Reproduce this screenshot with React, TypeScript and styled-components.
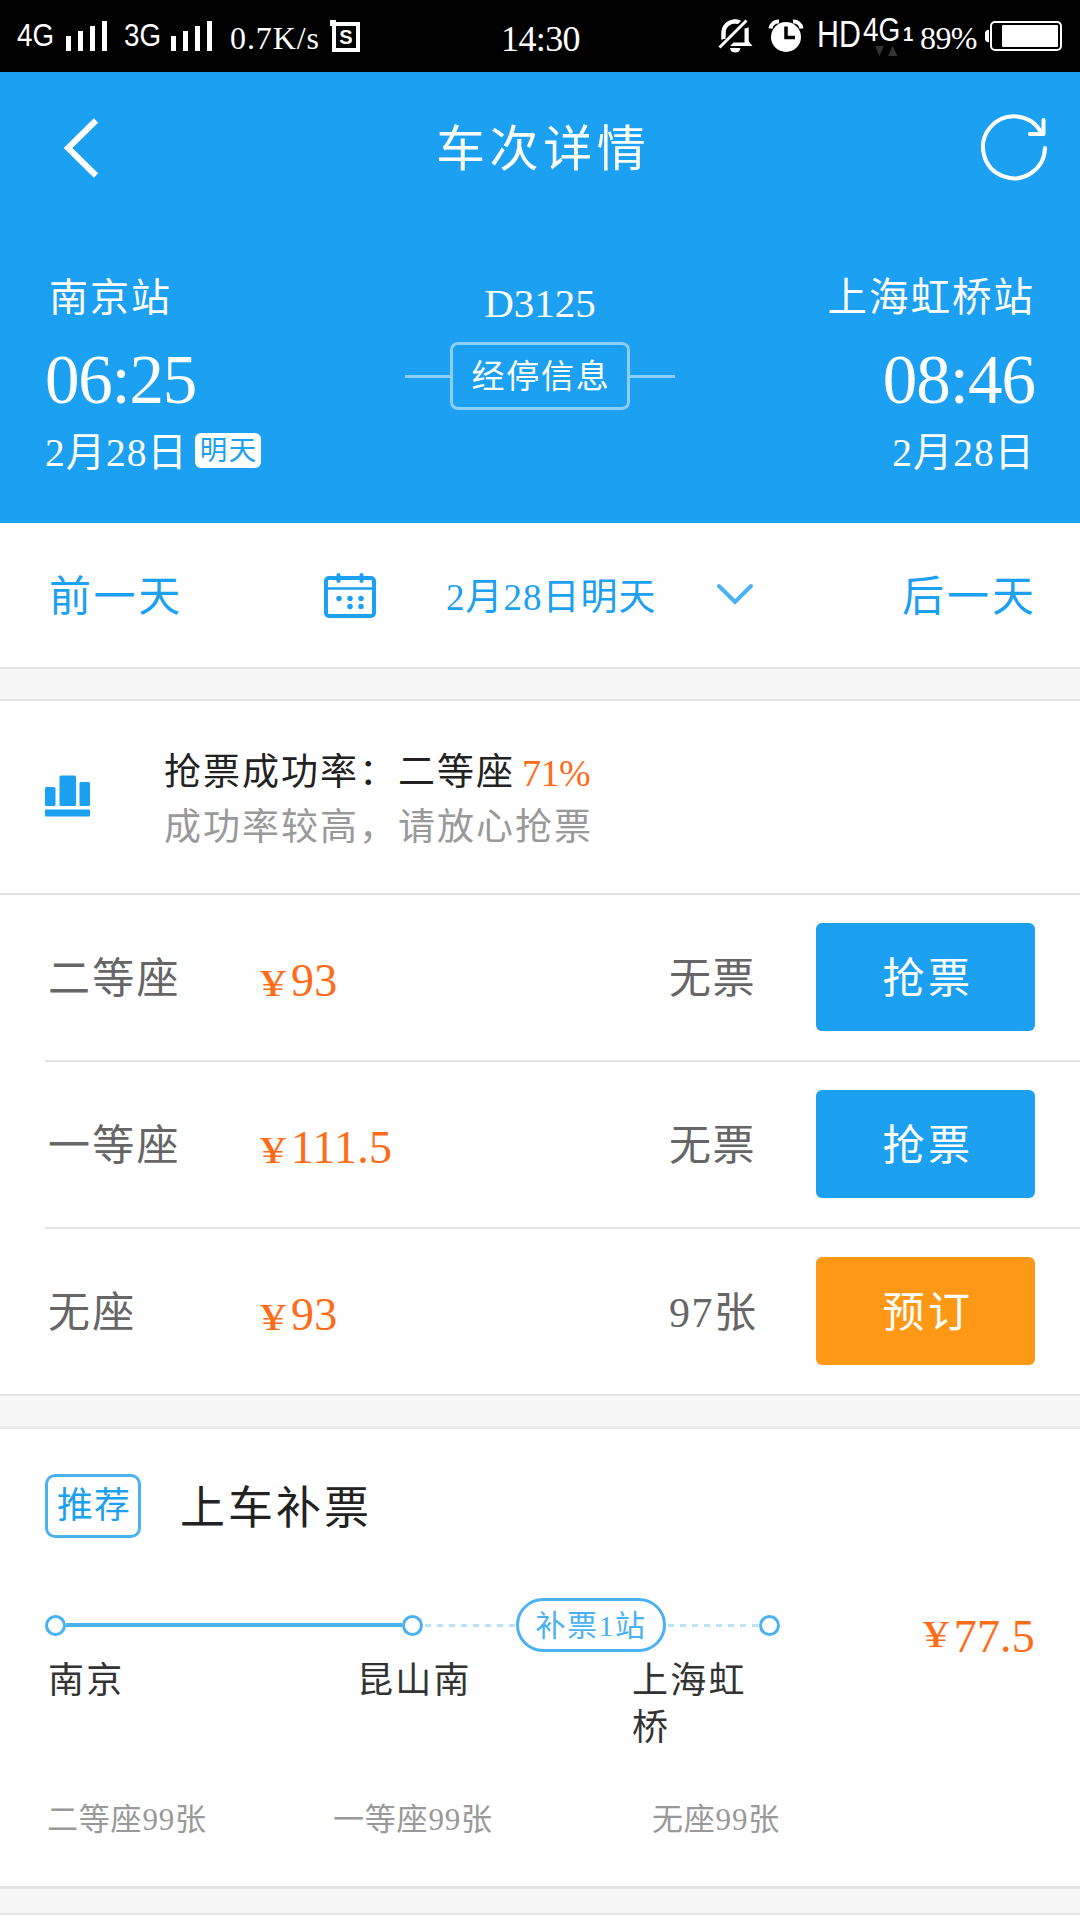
import React from "react";
import styled, { createGlobalStyle } from "styled-components";

const BLUE = "#1ba0f2";
const SOFT_BLUE = "#4ab2f2";
const ORANGE = "#ff6b17";

const GlobalStyle = createGlobalStyle`
  * { box-sizing: border-box; }
  body {
    margin: 0;
    background: #fff;
    font-family: "Liberation Serif", "Noto Sans CJK SC", serif;
  }
`;

const Page = styled.main`
  width: 1080px;
  height: 1920px;
  overflow: hidden;
  display: flex;
  flex-direction: column;
  background: #fff;
`;

const Label = styled.span<{ $size: number; $gap?: number; $lh?: number; $dy?: number; $ml?: number; $color?: string }>`
  display: block;
  flex: none;
  white-space: nowrap;
  font-size: ${(p) => p.$size}px;
  letter-spacing: ${(p) => p.$gap ?? 0}px;
  line-height: ${(p) => p.$lh ?? 50}px;
  margin-top: ${(p) => p.$dy ?? 0}px;
  margin-left: ${(p) => p.$ml ?? 0}px;
  color: ${(p) => p.$color ?? "inherit"};
`;

/* ---------- status bar ---------- */

const StatusBar = styled.div`
  flex: none;
  height: 72px;
  background: #000;
  color: #fff;
  display: grid;
  grid-template-columns: 501px 1fr auto;
  align-items: start;
`;

const StatusGroup = styled.div<{ $left?: number }>`
  display: flex;
  align-items: flex-start;
  padding-left: ${(p) => p.$left ?? 0}px;
  height: 72px;
`;

const Network = styled(Label)<{ $w: number; $narrow?: number }>`
  width: ${(p) => p.$w}px;
  font-family: "Liberation Sans", sans-serif;
  transform: scaleX(${(p) => p.$narrow ?? 0.88});
  transform-origin: left center;
`;

const StatusText = styled(Label)<{ $w: number }>`
  width: ${(p) => p.$w}px;
`;

const Icon = styled.svg<{ $ml?: number; $mt?: number }>`
  display: block;
  flex: none;
  margin-left: ${(p) => p.$ml ?? 0}px;
  margin-top: ${(p) => p.$mt ?? 0}px;
  overflow: visible;
`;

const MobileData = styled.div`
  display: grid;
  grid-template-columns: 40px 10px;
  grid-template-rows: 45px 12px;
  width: 57px;
`;

const ActivityIcon = styled(Icon)`
  grid-column: 1 / 3;
`;

const ServiceBox = styled.span`
  position: relative;
  width: 28px;
  height: 30px;
  margin: 22px 0 0 10px;
  border: 4px solid #fff;
  display: flex;
  align-items: center;
  justify-content: center;
  font: bold 20px/22px "Liberation Sans", sans-serif;

  &::before {
    content: "";
    position: absolute;
    left: -6px;
    top: -6px;
    width: 6px;
    height: 6px;
    background: #fff;
  }
`;

const SignalBars = () => (
  <Icon width="42" height="31" viewBox="0 0 42 31" $mt={21} fill="#fff">
    <rect x="0" y="15" width="5" height="15" />
    <rect x="12" y="10" width="5" height="20" />
    <rect x="24" y="5" width="5" height="25" />
    <rect x="36" y="0" width="5" height="30" />
  </Icon>
);

/* ---------- blue header ---------- */

const Hero = styled.header`
  flex: none;
  height: 451px;
  background: ${BLUE};
  color: #fff;
`;

const TitleBar = styled.div`
  height: 150px;
  display: grid;
  grid-template-columns: 374px 1fr auto;
  align-items: center;
  padding: 2px 32px 0 62px;
`;

const TitleAction = styled.div`
  display: flex;
`;

const Trip = styled.div`
  display: grid;
  grid-template-columns: 360px 270px 360px;
  padding: 50px 45px 0;
`;

const Endpoint = styled.div<{ $end?: boolean }>`
  display: flex;
  flex-direction: column;
  align-items: ${(p) => (p.$end ? "flex-end" : "flex-start")};
`;

const DateLine = styled.div`
  display: flex;
  align-items: flex-start;
  margin-top: 6px;
`;

const DayBadge = styled.span`
  height: 35px;
  width: 66px;
  margin: 5px 0 0 7px;
  padding-left: 2px;
  border-radius: 6px;
  background: #fff;
  color: ${BLUE};
  font-size: 27.5px;
  letter-spacing: 1.5px;
  line-height: 36px;
  text-align: center;
`;

const Middle = styled.div`
  display: flex;
  flex-direction: column;
  align-items: center;
`;

const StopsRow = styled.div`
  display: flex;
  align-items: center;
  margin-top: 14px;
`;

const StopsDash = styled.span`
  width: 45px;
  height: 3px;
  background: #8dcff8;
`;

const StopsButton = styled.button`
  width: 180px;
  height: 68px;
  padding: 2px 0 0 2px;
  border: 3px solid #8dcff8;
  border-radius: 8px;
  background: transparent;
  color: #fff;
  font-family: inherit;
  font-size: 33px;
  letter-spacing: 1.8px;
  line-height: 60px;
  white-space: nowrap;
`;

/* ---------- date switcher ---------- */

const DateBar = styled.nav`
  flex: none;
  height: 144px;
  display: grid;
  grid-template-columns: 279px 122px 271px 36px 1fr;
  align-items: center;
  padding: 0 43px 0 45px;
  color: ${BLUE};
`;

const NextDay = styled.div`
  justify-self: end;
`;

const Divider = styled.div<{ $edge: string; $top: number; $height: number; $bottom: number }>`
  flex: none;
  height: ${(p) => p.$height}px;
  background: #f7f7f7;
  border-top: ${(p) => p.$top}px solid #e3e3e3;
  border-bottom: ${(p) => p.$bottom}px solid ${(p) => p.$edge};
`;

/* ---------- success rate ---------- */

const RateSection = styled.section`
  flex: none;
  height: 194px;
  border-bottom: 2px solid #e3e3e3;
  display: grid;
  grid-template-columns: 119px 1fr;
  padding: 44px 45px 0;
`;

const RateLine = styled.div`
  display: flex;
  height: 54px;
`;

/* ---------- seat rows ---------- */

const SeatRow = styled.div<{ $last?: boolean }>`
  flex: none;
  height: ${(p) => (p.$last ? 165 : 167)}px;
  margin-left: 45px;
  padding: 0 45px 2px 0;
  border-bottom: ${(p) => (p.$last ? 0 : 2)}px solid #e3e3e3;
  display: grid;
  grid-template-columns: 215px 409px 147px 219px;
  align-items: center;
  color: #666;
`;

const Price = styled.div<{ $dy: number }>`
  display: flex;
  align-items: baseline;
  color: ${ORANGE};
  font-size: 46px;
  line-height: 60px;
  letter-spacing: 0.2px;
  padding-top: ${(p) => p.$dy}px;
`;

const Yen = styled.span<{ $lift: number }>`
  width: 31px;
  font-size: 38.5px;
  letter-spacing: 0;
  transform: translateY(${(p) => -p.$lift}px) scaleX(1.35);
  transform-origin: left center;
`;

const BuyButton = styled.button<{ $tone: string }>`
  width: 219px;
  height: 108px;
  padding: 0 0 5px 5px;
  border: 0;
  border-radius: 6px;
  background: ${(p) => p.$tone};
  color: #fff;
  font-family: inherit;
  font-size: 42px;
  letter-spacing: 3.5px;
`;

/* ---------- recommendation ---------- */

const Card = styled.section`
  flex: none;
  height: 457px;
  padding: 45px 45px 0;
`;

const CardHead = styled.div`
  display: flex;
  height: 64px;
  margin-bottom: 60px;
`;

const Tag = styled.span`
  width: 96px;
  height: 64px;
  margin-right: 39px;
  padding-left: 2px;
  border: 3px solid ${SOFT_BLUE};
  border-radius: 10px;
  color: ${BLUE};
  font-size: 36px;
  letter-spacing: 1px;
  line-height: 59px;
  text-align: center;
`;

const CardBody = styled.div`
  display: grid;
  grid-template-columns: 735px 1fr;
`;

const Track = styled.div`
  display: flex;
  align-items: center;
  height: 54px;
`;

const Dot = styled.span`
  flex: none;
  width: 21px;
  height: 21px;
  border: 3px solid ${SOFT_BLUE};
  border-radius: 50%;
`;

const Solid = styled.span`
  flex: 1;
  height: 4px;
  background: ${SOFT_BLUE};
`;

const Dashed = styled.span`
  width: 93px;
  height: 3px;
  background: repeating-linear-gradient(90deg, transparent 0 2px, #b9e3f7 2px 8px, transparent 8px 12px);
`;

const Pill = styled.span`
  flex: none;
  width: 150px;
  height: 54px;
  border: 3px solid ${SOFT_BLUE};
  border-radius: 27px;
  color: ${SOFT_BLUE};
  font-size: 30px;
  letter-spacing: 1.5px;
  line-height: 49px;
  text-align: center;
`;

const Stops = styled.div`
  display: grid;
  grid-template-columns: 309px 275px 120px;
  height: 143px;
  padding: 6px 0 0 3px;
  color: #333;
  font-size: 36px;
  letter-spacing: 2.3px;
  line-height: 47px;
`;

const Fare = styled.div`
  justify-self: end;
`;

const SeatsLeft = styled.div`
  display: grid;
  grid-template-columns: 286px 1fr auto;
  color: #999;
  padding-left: 2px;
`;

const seats = [
  { name: "二等座", price: "93", left: "无票", action: "抢票", tone: BLUE },
  { name: "一等座", price: "111.5", left: "无票", action: "抢票", tone: BLUE },
  { name: "无座", price: "93", left: "97张", action: "预订", tone: "#ff9915" },
];

export default function App() {
  return (
    <>
      <GlobalStyle />
      <Page>
        <StatusBar>
          <StatusGroup $left={17}>
            <Network $size={31.5} $w={49} $dy={10}>4G</Network>
            <SignalBars />
            <Network $size={31.5} $w={47} $dy={10} $ml={16}>3G</Network>
            <SignalBars />
            <StatusText $size={32} $gap={0.9} $w={92} $dy={13} $ml={17}>0.7K/s</StatusText>
            <ServiceBox>S</ServiceBox>
          </StatusGroup>
          <Label $size={36} $gap={-0.6} $dy={14}>14:30</Label>
          <StatusGroup>
            <Icon width="35" height="35" viewBox="0 0 35 35" $mt={19}>
              <path d="M5.500 22V14A11.500 11.500 0 0 1 23 4M28.500 9.500V24" fill="none" stroke="#fff" strokeWidth="4" />
              <path d="M12 27 15.500 23.500H27V10L30.500 8V22L34.500 27Z" fill="#fff" />
              <path d="M1.500 28.500 28 2" fill="none" stroke="#000" strokeWidth="7" />
              <path d="M5.500 20V14A11.500 11.500 0 0 1 20 3" fill="none" stroke="#fff" strokeWidth="4" />
              <path d="M1.500 28.500 28.500 1.500" fill="none" stroke="#fff" strokeWidth="3" />
              <path d="M12 29h10.500a5.300 5.300 0 0 1-10.500 0Z" fill="#fff" />
            </Icon>
            <Icon width="34" height="34" viewBox="0 0 34 34" $ml={16} $mt={19}>
              <circle cx="17" cy="18" r="15" fill="#fff" />
              <path d="M1.500 9.500A8 8 0 0 1 10 2.500M32.500 9.500A8 8 0 0 0 24 2.500" fill="none" stroke="#fff" strokeWidth="4" />
              <path d="M17 7.500V18.500h9" fill="none" stroke="#000" strokeWidth="3.500" />
            </Icon>
            <Network $size={37} $narrow={0.82} $w={46} $dy={10} $ml={14}>HD</Network>
            <MobileData>
              <Network $size={32.5} $narrow={0.86} $w={40} $lh={40} $dy={10}>4G</Network>
              <Network as="b" $size={21} $w={10} $lh={30} $dy={19}>1</Network>
              <ActivityIcon width="50" height="10" viewBox="0 0 50 10" $mt={1} fill="#333">
                <path d="M12 0h9l-4.500 10ZM25 10h9.500l-4.800-10Z" />
              </ActivityIcon>
            </MobileData>
            <StatusText $size={32} $gap={-0.6} $w={65} $dy={13}>89%</StatusText>
            <Icon width="95" height="30" viewBox="0 0 95 30" $mt={21}>
              <rect x="6" y="1" width="70" height="28" rx="4" fill="none" stroke="#fff" strokeWidth="2" />
              <rect x="17" y="4" width="56" height="22" rx="1" fill="#fff" />
              <path d="M4 9v12a3 3 0 0 1-4-3v-6a3 3 0 0 1 4-3Z" fill="#fff" />
            </Icon>
          </StatusGroup>
        </StatusBar>

        <Hero>
          <TitleBar>
            <TitleAction>
              <Icon width="40" height="60" viewBox="0 0 40 60" fill="none" stroke="#fff" strokeWidth="6">
                <path d="M34 2.500 6 30 34 57.500" />
              </Icon>
            </TitleAction>
            <Label $size={49} $gap={4.6} $lh={60} $dy={3}>车次详情</Label>
            <TitleAction>
              <Icon width="68" height="68" viewBox="0 0 68 68" fill="none" stroke="#fff" strokeWidth="4" strokeLinecap="round" strokeLinejoin="round">
                <path d="M65 34A31 31 0 1 1 61 18" />
                <path d="M63.500 6V20H50" />
              </Icon>
            </TitleAction>
          </TitleBar>
          <Trip>
            <Endpoint>
              <Label $size={39} $gap={2} $ml={4} $dy={1}>南京站</Label>
              <Label $size={69} $gap={-1.2} $lh={84} $dy={15}>06:25</Label>
              <DateLine>
                <Label $size={39.5} $gap={0.9}>2月28日</Label>
                <DayBadge>明天</DayBadge>
              </DateLine>
            </Endpoint>
            <Middle>
              <Label $size={41} $dy={6}>D3125</Label>
              <StopsRow>
                <StopsDash />
                <StopsButton>经停信息</StopsButton>
                <StopsDash />
              </StopsRow>
            </Middle>
            <Endpoint $end>
              <Label $size={39.5} $gap={2} $dy={1}>上海虹桥站</Label>
              <Label $size={69} $gap={-1} $lh={84} $dy={15}>08:46</Label>
              <DateLine>
                <Label $size={39.5} $gap={0.9}>2月28日</Label>
              </DateLine>
            </Endpoint>
          </Trip>
        </Hero>

        <DateBar>
          <Label $size={42} $gap={2.6} $ml={4} $dy={4}>前一天</Label>
          <Icon width="52" height="45" viewBox="0 0 52 45" fill="none" stroke={BLUE}>
            <rect x="2" y="5" width="48" height="38" rx="3" strokeWidth="4" />
            <path d="M2 15.500h48" strokeWidth="2.500" />
            <path d="M14.500 2v6M37.500 2v6" strokeWidth="4" strokeLinecap="round" />
            <path d="M15 25.500v.1M26 25.500v.1M37 25.500v.1M26 33.500v.1M37 33.500v.1" strokeWidth="5.500" strokeLinecap="round" />
          </Icon>
          <Label $size={37} $gap={1} $dy={5}>2月28日明天</Label>
          <Icon width="36" height="20" viewBox="0 0 36 20" $mt={-2} fill="none" stroke={SOFT_BLUE} strokeWidth="4" strokeLinecap="round">
            <path d="M2 2 18 18 34 2" />
          </Icon>
          <NextDay>
            <Label $size={42} $gap={3} $dy={4}>后一天</Label>
          </NextDay>
        </DateBar>

        <Divider $edge="#e3e3e3" $top={2} $height={34} $bottom={2} />

        <RateSection>
          <Icon width="45" height="42" viewBox="0 0 45 42" $mt={30} fill={BLUE}>
            <rect x="0" y="12" width="10.500" height="19" rx="1.500" />
            <rect x="14.500" y="0.500" width="16.500" height="30.500" rx="1.500" />
            <rect x="34.500" y="7" width="10.500" height="24" rx="1.500" />
            <rect x="0" y="34.500" width="45" height="7" rx="1" />
          </Icon>
          <div>
            <RateLine>
              <Label $size={37} $gap={2} $lh={54} $dy={1} $color="#222">抢票成功率：二等座</Label>
              <Label $size={38} $gap={-0.5} $lh={56} $ml={7} $color={ORANGE}>71%</Label>
            </RateLine>
            <Label $size={37} $gap={2} $lh={56} $dy={1} $color="#999">成功率较高，请放心抢票</Label>
          </div>
        </RateSection>

        {seats.map((s, i) => (
          <SeatRow key={s.name} $last={i === seats.length - 1}>
            <Label $size={42} $gap={2.3} $dy={5} $ml={3}>{s.name}</Label>
            <Price $dy={11}>
              <Yen $lift={0}>¥</Yen>
              {s.price}
            </Price>
            <Label $size={42} $gap={1.5} $dy={5}>{s.left}</Label>
            <BuyButton $tone={s.tone}>{s.action}</BuyButton>
          </SeatRow>
        ))}

        <Divider $edge="#ebebeb" $top={2} $height={35} $bottom={3} />

        <Card>
          <CardHead>
            <Tag>推荐</Tag>
            <Label $size={45} $gap={3} $lh={71} $color="#222">上车补票</Label>
          </CardHead>
          <CardBody>
            <div>
              <Track>
                <Dot />
                <Solid />
                <Dot />
                <Dashed />
                <Pill>补票1站</Pill>
                <Dashed />
                <Dot />
              </Track>
              <Stops>
                <span>南京</span>
                <span>昆山南</span>
                <span>上海虹桥</span>
              </Stops>
              <SeatsLeft>
                <Label $size={31} $gap={0.8}>二等座99张</Label>
                <Label $size={31} $gap={0.8}>一等座99张</Label>
                <Label $size={31} $gap={0.8}>无座99张</Label>
              </SeatsLeft>
            </div>
            <Fare>
              <Price $dy={9}>
                <Yen $lift={5}>¥</Yen>
                77.5
              </Price>
            </Fare>
          </CardBody>
        </Card>

        <Divider $edge="#e3e3e3" $top={3} $height={29} $bottom={2} />
      </Page>
    </>
  );
}
